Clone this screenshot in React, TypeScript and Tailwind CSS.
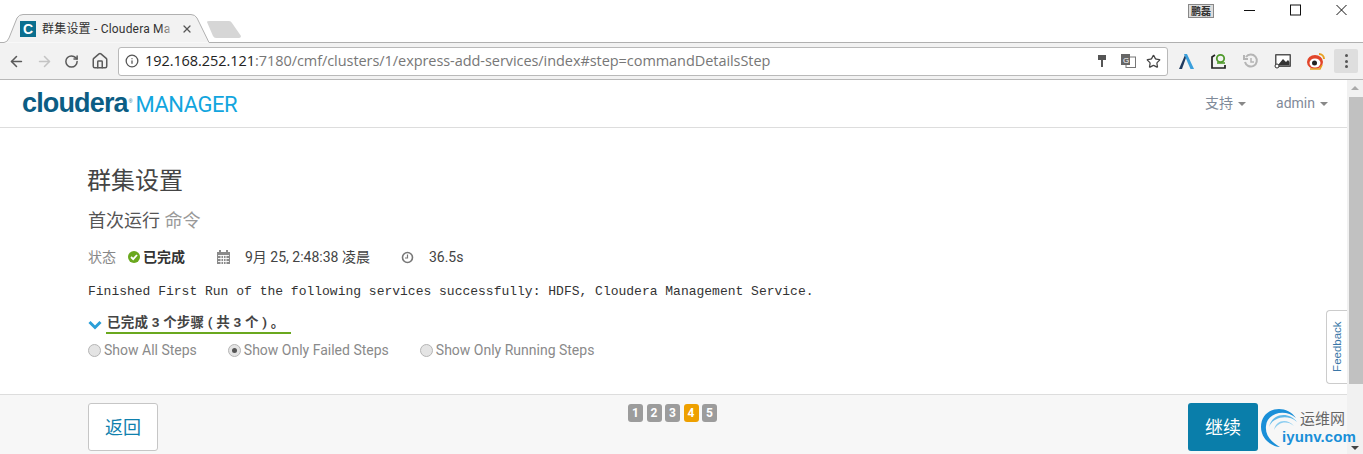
import { ArrowLeft, ArrowRight, RotateCw, Home, Info, Star, X } from 'lucide-react';

const cjk = 'font-["Roboto","Noto_Sans_CJK_SC",sans-serif]';

function Caret() {
  return <span className="ml-[5px] inline-block h-0 w-0 border-x-[4px] border-t-[4px] border-x-transparent border-t-[#888]" />;
}

function Radio({ label, checked }: { label: string; checked?: boolean }) {
  return (
    <label className="flex items-center gap-[3px]">
      <span className="flex h-[13px] w-[13px] items-center justify-center rounded-full border border-[#b5b5b5] bg-[#e4e4e4]">
        {checked && <span className="h-[5px] w-[5px] rounded-full bg-[#555]" />}
      </span>
      <span className="text-[14px] text-[#8a8a8a]">{label}</span>
    </label>
  );
}

function Tab() {
  return (
    <div className="relative h-[43px] w-[245px] shrink-0">
      <svg width="245" height="43" className="absolute left-0 top-0">
        <path d="M209 42.5H245" stroke="#b0b0b0" />
        <path d="M0 42.5H4Q7 42.5 9 38L17 18Q19 14.5 23 14.5H191Q195 14.5 197 18L209 42.5" fill="#f2f2f2" stroke="#b0b0b0" />
        <path d="M207 22Q207 21 209 21H229Q231 21 232 23L241 36Q241 38 239 38H216Q214 38 213 36Z" fill="#d6d6d6" />
      </svg>
      <div className="absolute left-[20px] top-[21px] flex h-[16px] w-[16px] items-center justify-center bg-[#0b6f8f] font-['Liberation_Sans',sans-serif] text-[14px] font-bold leading-none text-white">
        C
      </div>
      <div className={`absolute left-[42px] top-[20px] whitespace-nowrap text-[12px] leading-[18px] tracking-[0.2px] text-[#333] ${cjk}`}>
        群集设置 - Cloudera Ma
      </div>
      <div className="absolute left-[160px] top-[20px] h-[18px] w-[16px] bg-gradient-to-r from-transparent to-[#f2f2f2]" />
      <X className="absolute left-[181px] top-[23px] h-[12px] w-[12px] text-[#555]" strokeWidth={2.5} />
    </div>
  );
}

function WindowControls() {
  return (
    <div className="flex h-[43px] flex-1 items-start justify-end border-b border-[#b0b0b0] pr-[16px] pt-[4px]">
      <div className="mr-[30px] h-[14px] w-[26px] overflow-hidden border border-[#888] bg-[#ddd] text-center font-['Noto_Sans_CJK_SC',sans-serif] text-[10px] font-bold leading-[12px] text-[#333]">
        鹏磊
      </div>
      <svg width="11" height="12" viewBox="0 0 11 12" className="mr-[35px]">
        <path d="M0 6.5H11" stroke="#111" />
      </svg>
      <svg width="11" height="12" viewBox="0 0 11 12" className="mr-[35px]">
        <rect x="0.5" y="1" width="10" height="10" fill="none" stroke="#111" />
      </svg>
      <svg width="11" height="12" viewBox="0 0 11 12">
        <path d="M0.5 1L10.5 11M10.5 1L0.5 11" stroke="#111" />
      </svg>
    </div>
  );
}

function ExtIcons() {
  return (
    <div className="flex items-center">
      <svg width="18" height="18" viewBox="0 0 18 18" className="ml-[10px]">
        <path d="M1 17L7 3H9L4 17Z" fill="#1f3a5f" />
        <path d="M6 2H9L16 17H12.5Z" fill="#3a9fdc" />
      </svg>
      <svg width="18" height="18" viewBox="0 0 18 18" className="ml-[14px]" fill="none">
        <path d="M5 3L2 5V16H15V13" stroke="#222" strokeWidth="1.7" />
        <circle cx="10.5" cy="6.5" r="3.7" stroke="#4f9a2b" strokeWidth="1.8" />
        <path d="M7 11H15" stroke="#4f9a2b" strokeWidth="1.6" />
      </svg>
      <svg width="16" height="16" viewBox="0 0 16 16" className="ml-[15px]" fill="none" stroke="#b5b5b5" strokeWidth="2">
        <path d="M3 4A6 6 0 1 1 2 9" />
        <path d="M1 2V6H5" />
        <path d="M8 5V9H11" strokeWidth="1.5" />
      </svg>
      <svg width="18" height="16" viewBox="0 0 18 16" className="ml-[15px]">
        <rect x="1" y="1" width="16" height="13" rx="1" fill="#555" />
        <rect x="2.5" y="2.5" width="13" height="10" fill="#fff" />
        <path d="M4 12L9 6L12 9L14 7L15.5 9V12.5H4Z" fill="#333" />
        <circle cx="3" cy="13" r="2" fill="#fff" stroke="#333" />
      </svg>
      <svg width="20" height="18" viewBox="0 0 20 18" className="ml-[14px]">
        <ellipse cx="9" cy="10" rx="8" ry="7" fill="#e2452a" />
        <ellipse cx="9" cy="11" rx="5.5" ry="4.5" fill="#fff" />
        <circle cx="8.5" cy="11" r="2.5" fill="#222" />
        <path d="M13 2A5 5 0 0 1 18 7" stroke="#e8a020" strokeWidth="2" fill="none" />
        <path d="M4 17H14L16 13" stroke="#e8a020" strokeWidth="1.5" fill="none" />
      </svg>
      <div className="ml-[8px] flex h-[24px] w-[24px] flex-col items-center justify-center gap-[2.5px] rounded-[2px] bg-[#dedede]">
        <span className="h-[3px] w-[3px] rounded-full bg-[#555]" />
        <span className="h-[3px] w-[3px] rounded-full bg-[#555]" />
        <span className="h-[3px] w-[3px] rounded-full bg-[#555]" />
      </div>
    </div>
  );
}

function Toolbar() {
  return (
    <div className="flex h-[37px] items-center border-b border-b-[#b8b8b8] bg-[#f2f2f2] pl-[8px] pr-[5px]">
      <ArrowLeft className="h-[17px] w-[17px] text-[#5a5a5a]" strokeWidth={2.2} />
      <ArrowRight className="ml-[11px] h-[17px] w-[17px] text-[#c4c4c4]" strokeWidth={2.2} />
      <RotateCw className="ml-[11px] h-[15px] w-[15px] text-[#5a5a5a]" strokeWidth={2.4} />
      <Home className="ml-[12px] h-[18px] w-[18px] text-[#5a5a5a]" strokeWidth={2} />
      <div className="ml-[9px] flex h-[29px] w-[1051px] items-center rounded-[3px] border border-[#b9b9b9] bg-white pl-[6px] pr-[6px]">
        <Info className="h-[14px] w-[14px] shrink-0 text-[#555]" strokeWidth={2.2} />
        <div className="ml-[6px] flex-1 whitespace-nowrap font-['Open_Sans',sans-serif] text-[14.5px] tracking-[-0.06px] text-[#777]">
          <span className="text-[#222]">192.168.252.121</span>:7180/cmf/clusters/1/express-add-services/index#step=commandDetailsStep
        </div>
        <svg width="10" height="14" viewBox="0 0 10 14" className="mr-[14px]">
          <path d="M1 1H9V6H6V13H4V6H1Z" fill="#555" />
        </svg>
        <svg width="15" height="14" viewBox="0 0 15 14" className="mr-[10px]">
          <rect x="5" y="3" width="9.5" height="10.5" fill="#fff" stroke="#777" />
          <rect x="0" y="0" width="9" height="11" fill="#666" />
          <text x="2" y="9" fontSize="8" fill="#fff" fontFamily="Liberation Sans">G</text>
        </svg>
        <Star className="h-[15px] w-[15px] text-[#444]" strokeWidth={2} />
      </div>
      <ExtIcons />
    </div>
  );
}

function Logo() {
  return (
    <div className="flex items-baseline font-['Liberation_Sans',sans-serif]">
      <span className="text-[27px] font-bold leading-none tracking-[-0.85px] text-[#0b5d84]">cloudera</span>
      <span className="ml-[1px] self-start pt-[8px] text-[5px] text-[#0b5d84]">®</span>
      <span className="ml-[3px] font-['Roboto',sans-serif] text-[22px] leading-none tracking-[-0.45px] text-[#12a5de]">MANAGER</span>
    </div>
  );
}

function Header() {
  return (
    <div className="flex h-[48px] shrink-0 items-center justify-between border-b border-[#ddd] pl-[22px] pr-[19px]">
      <Logo />
      <div className={`flex items-center text-[14px] text-[#7f8a99] ${cjk}`}>
        <span>支持</span>
        <Caret />
        <span className="ml-[30px]">admin</span>
        <Caret />
      </div>
    </div>
  );
}

function Pager() {
  const steps = [1, 2, 3, 4, 5];
  return (
    <div className="mt-[9px] flex gap-[3.5px]">
      {steps.map(n => (
        <span
          key={n}
          className={`flex h-[18px] w-[15px] items-center justify-center rounded-[3px] text-[12px] font-bold text-white ${n === 4 ? 'bg-[#eea000]' : 'bg-[#9c9c9c]'}`}
        >
          {n}
        </span>
      ))}
    </div>
  );
}

function Footer() {
  return (
    <div className="flex h-[60px] shrink-0 items-start justify-between border-t border-[#ddd] bg-[#f7f7f7] pl-[88px] pr-[89px] pt-[8px]">
      <button className="h-[48px] w-[70px] rounded-[3px] border border-[#c6c6c6] bg-white text-[18px] text-[#0f80ad]">返回</button>
      <div className="-mt-[8px] mr-[1px]">
        <Pager />
      </div>
      <button className="h-[48px] w-[70px] rounded-[3px] bg-[#0a7eaa] text-[18px] text-white">继续</button>
    </div>
  );
}

function Content() {
  return (
    <div className="flex-1 pl-[88px] pt-[36px]">
      <h1 className="-ml-[1px] text-[24px] leading-[34px] text-[#444]">群集设置</h1>
      <h2 className="mt-[10px] text-[18px] leading-[26px] text-[#555]">
        首次运行 <span className="text-[#999]">命令</span>
      </h2>
      <div className="mt-[13px] flex h-[20px] items-center text-[14px] text-[#555]">
        <span className="text-[#888]">状态</span>
        <svg width="12" height="12" viewBox="0 0 12 12" className="ml-[12px]">
          <circle cx="6" cy="6" r="6" fill="#6aa81e" />
          <path d="M3 6L5.2 8.2L9 4" stroke="#fff" strokeWidth="1.8" fill="none" />
        </svg>
        <span className="ml-[3px] font-bold text-[#333]">已完成</span>
        <svg width="13" height="14" viewBox="0 0 13 14" className="ml-[32px]">
          <path d="M0 2H13V14H0Z" fill="#8a8a8a" />
          <path d="M3 0V3M10 0V3" stroke="#8a8a8a" strokeWidth="2" />
          <path d="M1 5.5H12M1 8.5H12M1 11.5H12M4 5V14M6.5 5V14M9 5V14" stroke="#fff" strokeWidth="0.9" />
        </svg>
        <span className="ml-[15px] text-[#444]">9月 25, 2:48:38 凌晨</span>
        <svg width="13" height="13" viewBox="0 0 13 13" className="ml-[31px]" fill="none" stroke="#777" strokeWidth="1.6">
          <circle cx="6.5" cy="6.5" r="5" />
          <path d="M6.5 3.5V7H4" strokeWidth="1.2" />
        </svg>
        <span className="ml-[15px] text-[#444]">36.5s</span>
      </div>
      <div className="mt-[16px] font-['Liberation_Mono',monospace] text-[13px] leading-[18px] text-[#333]">
        Finished First Run of the following services successfully: HDFS, Cloudera Management Service.
      </div>
      <div className="mt-[13px] flex items-start">
        <svg width="14" height="10" viewBox="0 0 14 10" className="mt-[6px]" fill="none">
          <path d="M1.5 2L7 7.5L12.5 2" stroke="#2a9fd8" strokeWidth="3" />
        </svg>
        <div className="ml-[4px] w-[185px] whitespace-nowrap border-b-2 border-[#6aa81e] pb-[1px] pl-[1px] text-[13.5px] font-bold leading-[17px] tracking-[0.2px] text-[#444]">
          已完成 3 个步骤 ( 共 3 个 ) 。
        </div>
      </div>
      <div className="mt-[7px] flex h-[18px] items-center gap-[31px]">
        <Radio label="Show All Steps" />
        <Radio label="Show Only Failed Steps" checked />
        <Radio label="Show Only Running Steps" />
      </div>
    </div>
  );
}

function Scrollbar() {
  return (
    <div className="flex w-[16px] shrink-0 flex-col items-center bg-[#f1f1f1]">
      <span className="mt-[6px] h-0 w-0 border-x-[4px] border-b-[4px] border-x-transparent border-b-[#aaa]" />
      <div className="ml-[2px] mt-[7px] h-[287px] w-[14px] bg-[#c1c1c1]" />
      <span className="mt-[62px] h-0 w-0 border-x-[4px] border-t-[4px] border-x-transparent border-t-[#444]" />
    </div>
  );
}

export default function App() {
  return (
    <div className={`relative flex h-[454px] w-[1363px] flex-col overflow-hidden bg-white ${cjk}`}>
      <div className="flex h-[43px] items-start bg-white">
        <Tab />
        <WindowControls />
      </div>
      <Toolbar />
      <div className="flex min-h-0 flex-1">
        <div className="flex flex-1 flex-col">
          <Header />
          <Content />
          <Footer />
        </div>
        <Scrollbar />
      </div>
      {/* feedback tab */}
      <div className="absolute left-[1326px] top-[310px] flex h-[74px] w-[21px] items-center justify-center rounded-l-[4px] border border-r-0 border-[#ccc] bg-white">
        <span className="-rotate-90 whitespace-nowrap font-['Liberation_Sans',sans-serif] text-[11.5px] text-[#3b78a8]">Feedback</span>
      </div>
      {/* watermark */}
      <div className="absolute left-[1260px] top-[406px] h-[42px] w-[100px]">
        <svg width="44" height="42" viewBox="0 0 44 42" className="absolute left-0 top-0">
          <path d="M36 12C26 -3 1 1 1 21C1 32 10 40 20 41C11 36 5 29 6 20C7 7 25 2 36 12Z" fill="#1a8fd8" />
          <path d="M37 16C29 5 11 7 9 22C11 12 27 7 37 16Z" fill="#5fb8e8" />
          <path d="M34 20C27 12 16 14 14 24C18 16 27 14 34 20Z" fill="#8ccdf0" />
        </svg>
        <span className="absolute left-[40px] top-[3px] text-[15px] leading-[20px] text-[#666]">运维网</span>
        <span className="absolute left-[22px] top-[22px] font-['Liberation_Sans',sans-serif] text-[15px] font-bold leading-[18px] tracking-[0.1px] text-[#1a8fd8]">iyunv.com</span>
      </div>
    </div>
  );
}
